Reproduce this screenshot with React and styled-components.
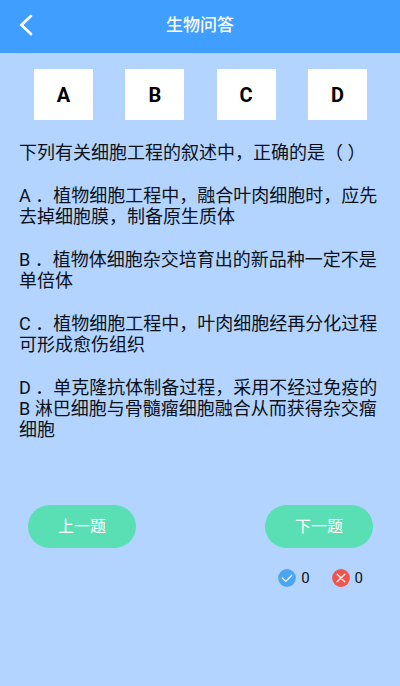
import { useState } from "react";
import styled, { createGlobalStyle } from "styled-components";

const GlobalStyle = createGlobalStyle`
  * {
    box-sizing: border-box;
  }

  body {
    margin: 0;
    min-height: 100vh;
    background-color: #b3d4ff;
    color: #0b1119;
    font-family: Roboto, "Noto Sans CJK SC", sans-serif;
  }

  button {
    border: none;
    padding: 0;
    font-family: inherit;
    cursor: pointer;
  }
`;

const Header = styled.header`
  display: grid;
  grid-template-columns: 52px 1fr 52px;
  align-items: center;
  height: 53px;
  padding-bottom: 3px;
  background-color: #409eff;
  color: #fff;
`;

const BackButton = styled.button`
  display: flex;
  align-items: center;
  justify-content: center;
  height: 48px;
  background: none;
  color: inherit;
`;

const Title = styled.h1`
  margin: 0;
  font-size: 17px;
  font-weight: 500;
  line-height: 24px;
  text-align: center;
`;

const Options = styled.div`
  display: flex;
  justify-content: space-between;
  padding: 16px 33px 0 34px;
`;

const Option = styled.button`
  width: 59px;
  height: 51px;
  background-color: ${(props) => (props.$selected ? "#e3f0ff" : "#fff")};
  color: #000;
  font-size: 20px;
  font-weight: 700;
`;

const Question = styled.section`
  padding: 22px 18px 0 19px;
  font-size: 18px;
  line-height: 21px;
`;

const Paragraph = styled.p`
  margin: 0 0 22px;
`;

const Pager = styled.nav`
  display: flex;
  justify-content: space-between;
  padding: 43px 27px 0 28px;
`;

const PagerButton = styled.button`
  width: 108px;
  height: 43px;
  padding-bottom: 3px;
  border-radius: 22px;
  background-color: #5adfb5;
  color: #fff;
  font-size: 16px;
`;

const Scores = styled.div`
  display: flex;
  justify-content: flex-end;
  gap: 22px;
  padding: 20px 37px 0;
`;

const Score = styled.span`
  display: flex;
  align-items: center;
  gap: 5px;
  font-size: 15px;
  line-height: 20px;
`;

const choices = [
  { id: "A", text: "植物细胞工程中，融合叶肉细胞时，应先去掉细胞膜，制备原生质体" },
  { id: "B", text: "植物体细胞杂交培育出的新品种一定不是单倍体" },
  { id: "C", text: "植物细胞工程中，叶肉细胞经再分化过程可形成愈伤组织" },
  { id: "D", text: "单克隆抗体制备过程，采用不经过免疫的 B 淋巴细胞与骨髓瘤细胞融合从而获得杂交瘤细胞" },
];

function ScoreIcon({ color, path }) {
  return (
    <svg width="18" height="18" viewBox="0 0 18 18" aria-hidden="true">
      <circle cx="9" cy="9" r="8.9" fill={color} />
      <path d={path} fill="none" stroke="#fff" strokeWidth="1.3" strokeLinecap="round" strokeLinejoin="round" />
    </svg>
  );
}

function App() {
  const [selected, setSelected] = useState(null);

  return (
    <>
      <GlobalStyle />
      <Header>
        <BackButton aria-label="返回">
          <svg width="14" height="22" viewBox="0 0 14 22" fill="none" stroke="currentColor" strokeWidth="2.7" strokeLinecap="round">
            <path d="M12 2L2.4 11L12 20" />
          </svg>
        </BackButton>
        <Title>生物问答</Title>
      </Header>
      <main>
        <Options>
          {choices.map(({ id }) => (
            <Option key={id} $selected={selected === id} onClick={() => setSelected(id)}>
              {id}
            </Option>
          ))}
        </Options>
        <Question>
          <Paragraph>下列有关细胞工程的叙述中，正确的是（ ）</Paragraph>
          {choices.map(({ id, text }) => (
            <Paragraph key={id}>{`${id} ．${text}`}</Paragraph>
          ))}
        </Question>
        <Pager>
          <PagerButton>上一题</PagerButton>
          <PagerButton>下一题</PagerButton>
        </Pager>
        <Scores>
          <Score>
            <ScoreIcon color="#4ba6f2" path="M4.2 9L7.8 12.4L13.8 6.2" />0
          </Score>
          <Score>
            <ScoreIcon color="#f0544d" path="M5.2 5.2L12.8 12.8M12.8 5.2L5.2 12.8" />0
          </Score>
        </Scores>
      </main>
    </>
  );
}

export default App;
